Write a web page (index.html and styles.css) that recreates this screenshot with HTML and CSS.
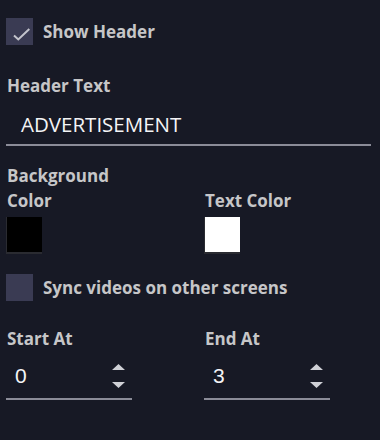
FILE: index.html
```html
<!DOCTYPE html>
<html lang="en">
<head>
    <meta charset="UTF-8">
    <meta name="viewport" content="width=device-width, initial-scale=1.0">
    <title>Header Settings</title>
    <link rel="stylesheet" href="styles.css">
</head>
<body>
    <div class="panel">
        <div class="check-row">
            <span class="checkbox checked">
                <svg width="27" height="27" viewBox="0 0 27 27"><path d="M8 17.5 L12.3 21.5 L23.3 11" fill="none" stroke="#c3c4cc" stroke-width="2"/></svg>
            </span>
            <span class="check-label">Show Header</span>
        </div>

        <div class="field header-field">
            <label>Header Text</label>
            <div class="text-input">ADVERTISEMENT</div>
        </div>

        <div class="pair colors">
            <div class="color-field">
                <label>Background<br>Color</label>
                <span class="swatch black"></span>
            </div>
            <div class="color-field">
                <label>Text Color</label>
                <span class="swatch white"></span>
            </div>
        </div>

        <div class="check-row sync-row">
            <span class="checkbox"></span>
            <span class="check-label">Sync videos on other screens</span>
        </div>

        <div class="pair times">
            <div class="field">
                <label>Start At</label>
                <div class="number-input">
                    <span>0</span>
                    <svg class="spinner" width="13" height="24" viewBox="0 0 13 24"><path d="M6.5 0 L13 6 L0 6 Z M0 18 L13 18 L6.5 24 Z" fill="#cfd0d6"/></svg>
                </div>
            </div>
            <div class="field">
                <label>End At</label>
                <div class="number-input">
                    <span>3</span>
                    <svg class="spinner" width="13" height="24" viewBox="0 0 13 24"><path d="M6.5 0 L13 6 L0 6 Z M0 18 L13 18 L6.5 24 Z" fill="#cfd0d6"/></svg>
                </div>
            </div>
        </div>
    </div>
</body>
</html>
```

FILE: styles.css
```css
body {
    margin: 0;
    background-color: #171925;
    font-family: 'Open Sans', sans-serif;
    color: #c6c6c8;
    width: 380px;
    height: 440px;
    overflow: hidden;
}
.panel {
    padding: 18px 9px 0 6px;
}
.check-row {
    display: flex;
    align-items: center;
    gap: 10px;
}
.checkbox {
    display: block;
    width: 27px;
    height: 27px;
    background-color: #3a3b53;
}
.checkbox svg {
    display: block;
}
.check-label {
    font-size: 17px;
    font-weight: bold;
    line-height: 25px;
}
label {
    display: block;
    font-size: 17px;
    font-weight: bold;
    line-height: 25px;
    padding-left: 1px;
}
.header-field {
    margin-top: 28px;
}
.text-input {
    margin-top: 12px;
    padding: 0 0 6px 15px;
    font-size: 20.5px;
    line-height: 28px;
    color: #f4f4f6;
    border-bottom: 2px solid #8b8c98;
}
.pair {
    display: grid;
    grid-template-columns: 198px 1fr;
    align-items: end;
}
.colors {
    margin-top: 17px;
}
.swatch {
    display: block;
    width: 35px;
    height: 35px;
    margin-top: 4px;
    border-left: 1px solid #2a2b31;
    border-bottom: 2px solid #2a2b31;
}
.swatch.black {
    background-color: #000;
}
.swatch.white {
    background-color: #fff;
}
.sync-row {
    margin-top: 20px;
}
.times {
    margin-top: 25px;
}
.number-input {
    display: flex;
    align-items: center;
    justify-content: space-between;
    width: 126px;
    box-sizing: border-box;
    margin-top: 11px;
    padding: 0 7px 8px 9px;
    font-family: 'Liberation Sans', Arial, sans-serif;
    font-size: 21px;
    line-height: 28px;
    color: #f4f4f6;
    border-bottom: 2px solid #8b8c98;
}
.spinner {
    display: block;
}
```
